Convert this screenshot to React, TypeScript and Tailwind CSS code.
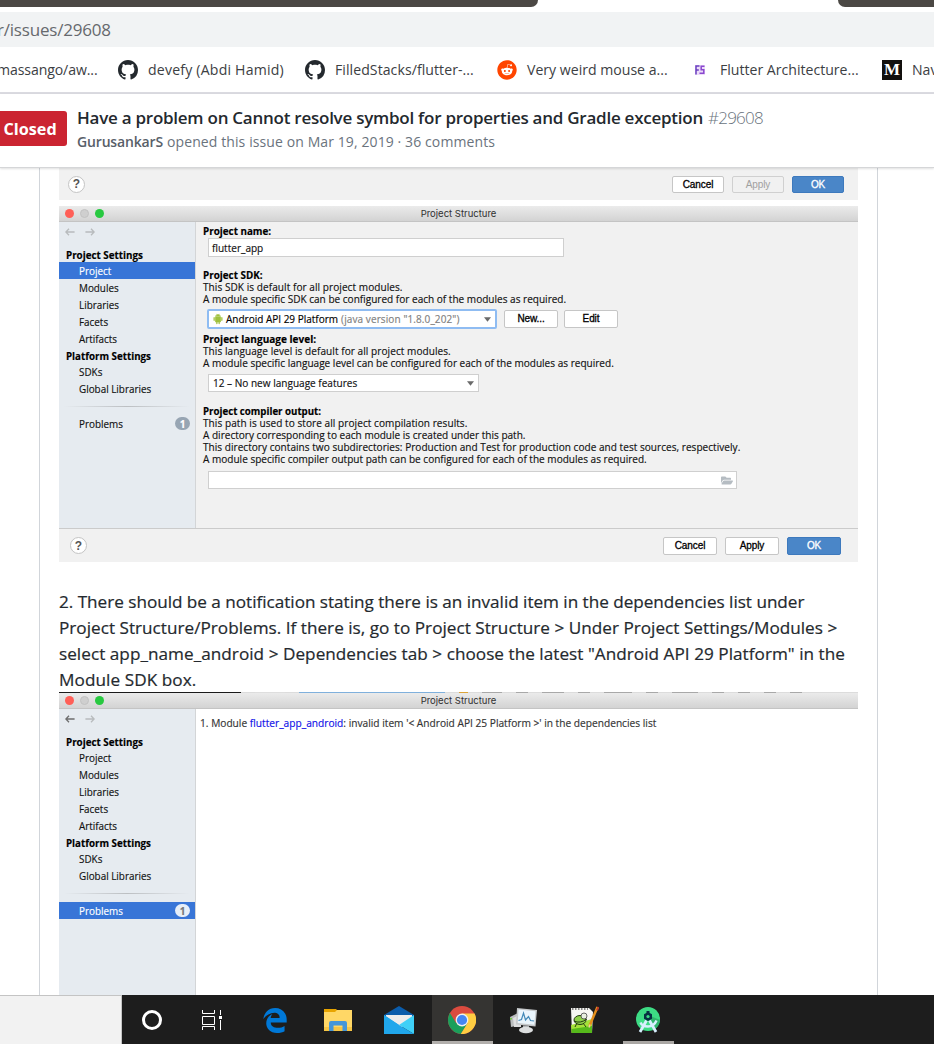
import type { ReactNode } from "react";
import { FaReddit, FaFolderOpen } from "react-icons/fa";
import { FaEdgeLegacy } from "react-icons/fa6";
import { AiFillAndroid } from "react-icons/ai";

function TabStrip() {
  return (
    <div className="flex h-[7px] justify-between bg-white">
      <div className="w-[538px] rounded-br-[9px] bg-[#4b4844]" />
      <div className="w-[96px] rounded-bl-[9px] bg-[#4b4844]" />
    </div>
  );
}

function GithubMark() {
  return (
    <svg className="h-5 w-5 shrink-0" viewBox="0 0 16 16" fill="#24292e">
      <path d="M8 0C3.58 0 0 3.58 0 8c0 3.54 2.29 6.53 5.47 7.59.4.07.55-.17.55-.38 0-.19-.01-.82-.01-1.49-2.01.37-2.53-.49-2.69-.94-.09-.23-.48-.94-.82-1.13-.28-.15-.68-.52-.01-.53.63-.01 1.08.58 1.23.82.72 1.21 1.87.87 2.33.66.07-.52.28-.87.51-1.07-1.78-.2-3.64-.89-3.64-3.95 0-.87.31-1.59.82-2.15-.08-.2-.36-1.02.08-2.12 0 0 .67-.21 2.2.82.64-.18 1.32-.27 2-.27s1.36.09 2 .27c1.53-1.04 2.2-.82 2.2-.82.44 1.1.16 1.92.08 2.12.51.56.82 1.27.82 2.15 0 3.07-1.87 3.75-3.65 3.95.29.25.54.73.54 1.48 0 1.07-.01 1.93-.01 2.2 0 .21.15.46.55.38A8.01 8.01 0 0 0 16 8c0-4.42-3.58-8-8-8z" />
    </svg>
  );
}

function Bookmarks() {
  return (
    <div className="flex h-[47px] items-center border-b-2 border-[#dadae0] bg-white text-[14.1px] whitespace-nowrap text-[#3c4043]">
      <span className="-ml-[3px] w-[121px] shrink-0 tracking-[-0.1px]">massango/aw...</span>
      <GithubMark />
      <span className="ml-[10px] w-[157px] shrink-0 tracking-[0.2px]">devefy (Abdi Hamid)</span>
      <GithubMark />
      <span className="ml-[10px] w-[162px] shrink-0 tracking-[0.06px]">FilledStacks/flutter-...</span>
      <FaReddit className="h-5 w-5 shrink-0 text-[#ff4500]" />
      <span className="ml-[10px] w-[168px] shrink-0">Very weird mouse a...</span>
      <svg className="h-[10px] w-[10px] shrink-0" viewBox="0 0 10 10" fill="none" strokeWidth="1.5">
        <rect width="10" height="10" fill="#ecdcf8" />
        <path d="M4.500 1H1v8.500M1 5h2.800" stroke="#6a3fc0" />
        <path d="M9.500 1.300H6.200V4.800h2.600v3.400H4.500" stroke="#8a48cf" />
      </svg>
      <span className="ml-[15px] w-[162px] shrink-0">Flutter Architecture...</span>
      <span className="flex h-5 w-5 shrink-0 items-center justify-center bg-[#12100e] font-['Liberation_Serif',serif] text-[17px] leading-none font-bold text-white">
        M
      </span>
      <span className="ml-[10px]">Nav</span>
    </div>
  );
}

function IssueHeader() {
  return (
    <div className="relative z-10 flex h-[74px] border-b border-[#d5d6d8] bg-white shadow-[0_1px_2px_rgba(0,0,0,0.12)]">
      <div className="mt-[17px] flex h-[35px] w-[67px] items-center rounded-r-[3px] bg-[#cb2431] pt-[2px] pl-[3.500px] text-[16.2px] font-bold text-white">
        Closed
      </div>
      <div className="mt-[12px] ml-[10px] whitespace-nowrap">
        <div className="flex h-[24px] items-center gap-[5px] text-[17px]">
          <span className="font-semibold tracking-[-0.25px] text-[#24292e]">
            Have a problem on Cannot resolve symbol for properties and Gradle exception
          </span>
          <span className="font-light tracking-[-0.75px] text-[#6a737d]">#29608</span>
        </div>
        <div className="flex h-[22px] items-center gap-[4px] text-[14px] text-[#6a737d]">
          <span className="font-semibold tracking-[-0.154px] text-[#586069]">GurusankarS</span>
          <span className="tracking-[0.1px]">opened this issue on Mar 19, 2019 · 36 comments</span>
        </div>
      </div>
    </div>
  );
}

function Help() {
  return (
    <span className="flex h-[17px] w-[17px] items-center justify-center rounded-full border border-[#c4c4c4] bg-white font-['Liberation_Sans',sans-serif] text-[12px] font-bold text-[#555]">
      ?
    </span>
  );
}

function Button({ children, kind = "plain", wide = false }: { children: ReactNode; kind?: "plain" | "off" | "primary"; wide?: boolean }) {
  const look = {
    plain: "border-[#c6c6c6] bg-white text-black [-webkit-text-stroke:0.3px_black]",
    off: "border-[#d0d0d0] bg-[#f1f1f1] text-[#a0a0a0]",
    primary: "border-[#3d79bd] bg-[#4a86c8] text-white [-webkit-text-stroke:0.3px_white]",
  }[kind];
  return (
    <span
      className={`flex items-center justify-center rounded-[2px] border font-['Liberation_Sans',sans-serif] text-[10px] tracking-[-0.1px] ${wide ? "h-[18px] w-[54px]" : "h-[17px] w-[52px]"} ${look}`}
    >
      {children}
    </span>
  );
}

function TitleBar() {
  return (
    <div className="grid h-[16px] grid-cols-[1fr_auto_1fr] items-center border-b border-[#c4c4c4] bg-linear-to-b from-[#ebebeb] to-[#d3d3d3]">
      <div className="flex gap-[6px] pl-[6px]">
        <i className="h-[9px] w-[9px] rounded-full bg-[#ff5f57]" />
        <i className="h-[9px] w-[9px] rounded-full border border-[#c2c2c2] bg-[#cfcfcf]" />
        <i className="h-[9px] w-[9px] rounded-full bg-[#28c940]" />
      </div>
      <span className="font-['Inter',sans-serif] text-[9.5px] leading-none text-[#303030]">Project Structure</span>
    </div>
  );
}

function Arrow({ flip = false, dark = false }: { flip?: boolean; dark?: boolean }) {
  return (
    <svg className={`h-[8px] w-[10px] ${flip ? "-scale-x-100" : ""} ${dark ? "text-[#6e6e6e]" : "text-[#b8bbbd]"}`} viewBox="0 0 10 8" fill="none" stroke="currentColor" strokeWidth="1.3">
      <path d="M9.6 4H1M4 .8.9 4 4 7.2" />
    </svg>
  );
}

function NavRow({ label, active = false, badge }: { label: string; active?: boolean; badge?: string }) {
  return (
    <div className={`flex h-[17px] items-center justify-between pr-[5px] pl-[20px] ${active ? "bg-[#3875d7] text-white" : ""}`}>
      <span>{label}</span>
      {badge && (
        <span className={`flex h-[13px] w-[15px] items-center justify-center rounded-full text-[10px] leading-none font-bold ${active ? "bg-[#e6eef8] text-[#777]" : "bg-[#97a5b3] text-white"}`}>
          {badge}
        </span>
      )}
    </div>
  );
}

function Sidebar({ active }: { active: string }) {
  return (
    <div className="w-[137px] shrink-0 border-r border-[#d3d5d7] bg-[#e6ebf0] text-[9.9px] leading-[12px] text-[#111] [-webkit-text-stroke:0.15px_currentColor]">
      <div className="flex h-[20px] items-center gap-[10px] pl-[6px]">
        <Arrow dark={active === "Problems"} />
        <Arrow flip />
      </div>
      <div className="h-[20px] pt-[8px] pl-[7px] text-[9.82px] font-bold text-black">Project Settings</div>
      {["Project", "Modules", "Libraries", "Facets", "Artifacts"].map((l) => (
        <NavRow key={l} label={l} active={l === active} />
      ))}
      <div className="h-[16px] pt-[4px] pl-[7px] text-[9.76px] font-bold text-black">Platform Settings</div>
      <NavRow label="SDKs" />
      <NavRow label="Global Libraries" />
      <div className="mx-[5px] mt-[9px] mb-[8px] h-px bg-linear-to-r from-transparent via-[#bcbfc2] to-transparent" />
      <NavRow label="Problems" badge="1" active={active === "Problems"} />
    </div>
  );
}

function Heading({ children, className = "" }: { children: ReactNode; className?: string }) {
  return <div className={`h-[12px] font-bold text-black ${className}`}>{children}</div>;
}

function Caret() {
  return (
    <svg className="h-[5px] w-[7px]" viewBox="0 0 7 5">
      <path d="M0 .3h7L3.5 4.7z" fill="#6a6a6a" />
    </svg>
  );
}

function ProjectPane() {
  return (
    <div className="flex-1 pt-[3px] pl-[7px] text-[10.05px] leading-[12px] whitespace-nowrap text-[#111] [-webkit-text-stroke:0.15px_currentColor]">
      <Heading className="text-[9.85px]">Project name:</Heading>
      <div className="mt-px ml-[5px] flex h-[19px] w-[356px] items-center border border-[#cfcfcf] bg-white pl-[3px]">flutter_app</div>
      <Heading className="mt-[12px] text-[9.85px]">Project SDK:</Heading>
      <div className="tracking-[0.06px]">This SDK is default for all project modules.</div>
      <div>A module specific SDK can be configured for each of the modules as required.</div>
      <div className="mt-[4px] ml-[4px] flex h-[20px] items-center">
        <div className="flex h-[20px] w-[290px] items-center rounded-[2px] border-2 border-[#8fbcf2] bg-white pr-[4px] pl-[3px] text-[10px]">
          <AiFillAndroid className="mr-[2px] h-[12px] w-[12px] text-[#9fc13c]" />
          <span className="text-black">Android API 29 Platform</span>
          <span className="ml-[3px] flex-1 tracking-[0.1px] text-[#808080]">(java version "1.8.0_202")</span>
          <Caret />
        </div>
        <div className="ml-[7px] flex gap-[6px]">
          <Button wide>New...</Button>
          <Button wide>Edit</Button>
        </div>
      </div>
      <Heading className="mt-[4px] text-[10.05px]">Project language level:</Heading>
      <div className="tracking-[0.06px]">This language level is default for all project modules.</div>
      <div>A module specific language level can be configured for each of the modules as required.</div>
      <div className="mt-[5px] ml-[5px] flex h-[18px] w-[271px] items-center justify-between border border-[#cfcfcf] bg-white pr-[4px] pl-[4px]">
        12 – No new language features
        <Caret />
      </div>
      <Heading className="mt-[14px] text-[9.7px]">Project compiler output:</Heading>
      <div className="-mt-px tracking-[0.06px]">This path is used to store all project compilation results.</div>
      <div>A directory corresponding to each module is created under this path.</div>
      <div className="tracking-[0.03px]">This directory contains two subdirectories: Production and Test for production code and test sources, respectively.</div>
      <div>A module specific compiler output path can be configured for each of the modules as required.</div>
      <div className="mt-[6px] ml-[5px] flex h-[18px] w-[529px] items-center justify-end border border-[#cfcfcf] bg-white pr-[3px]">
        <FaFolderOpen className="h-[11px] w-[12px] text-[#b5bcc2]" />
      </div>
    </div>
  );
}

function BackgroundSliver() {
  return (
    <div className="flex h-px gap-[14px] bg-[#dcdcdc]">
      <i className="w-[182px] bg-[#1b1b1b]" />
      <i className="w-[30px] bg-[#dedede]" />
      <i className="w-[146px] bg-[#7fb0dc]" />
      <i className="w-[9px] bg-[#dba43a]" />
      {[20, 12, 22, 12, 28, 12, 26, 12, 12, 12, 12].map((w, i) => (
        <i key={i} className="bg-[#a8a8a8]" style={{ width: w }} />
      ))}
    </div>
  );
}

function Article() {
  return (
    <div className="ml-[39px] flex h-[827px] w-[839px] flex-col overflow-hidden border-x border-[#d1d5da] bg-white pl-[19px]">
      <div className="flex h-[32px] w-[799px] shrink-0 items-center justify-between bg-[#f1f1f1] pr-[14px] pl-[9px]">
        <Help />
        <div className="flex gap-[8px]">
          <Button>Cancel</Button>
          <Button kind="off">Apply</Button>
          <Button kind="primary">OK</Button>
        </div>
      </div>

      <div className="mt-[6px] flex h-[356px] w-[799px] shrink-0 flex-col bg-[#f1f1f1]">
        <TitleBar />
        <div className="flex h-[306px]">
          <Sidebar active="Project" />
          <ProjectPane />
        </div>
        <div className="flex flex-1 items-center justify-between border-t border-[#cbcbcb] pr-[17px] pl-[11px]">
          <Help />
          <div className="flex gap-[8px]">
            <Button wide>Cancel</Button>
            <Button wide>Apply</Button>
            <Button wide kind="primary">OK</Button>
          </div>
        </div>
      </div>

      <div className="mt-[27px] h-[103px] shrink-0 text-[17.15px] leading-[26px] whitespace-nowrap text-[#24292e] [-webkit-text-stroke:0.2px_currentColor]">
        <div className="tracking-[-0.02px]">2. There should be a notification stating there is an invalid item in the dependencies list under</div>
        <div className="tracking-[0.02px]">Project Structure/Problems. If there is, go to Project Structure &gt; Under Project Settings/Modules &gt;</div>
        <div className="tracking-[0.04px]">select app_name_android &gt; Dependencies tab &gt; choose the latest "Android API 29 Platform" in the</div>
        <div className="tracking-[0.08px]">Module SDK box.</div>
      </div>

      <div className="flex w-[799px] flex-1 flex-col">
        <BackgroundSliver />
        <TitleBar />
        <div className="flex flex-1">
          <Sidebar active="Problems" />
          <div className="pt-[8px] pl-[4px] text-[10.18px] leading-[12px] whitespace-nowrap text-[#333] [-webkit-text-stroke:0.15px_currentColor]">
            1. Module <span className="text-[#1010e8]">flutter_app_android</span>: invalid item '&lt; Android API 25 Platform &gt;' in the dependencies list
          </div>
        </div>
      </div>
    </div>
  );
}

function TaskSlot({ children, className = "" }: { children: ReactNode; className?: string }) {
  return <div className={`flex h-[49px] items-center justify-center ${className}`}>{children}</div>;
}

function Taskbar() {
  return (
    <div className="flex h-[49px] bg-[#1d1d1d]">
      <div className="w-[122px] border-t border-r border-[#c4c4c4] bg-[#f2f2f2]" />
      <TaskSlot className="w-[60px] pt-px">
        <span className="h-[20px] w-[20px] rounded-full border-[3px] border-white" />
      </TaskSlot>
      <TaskSlot className="w-[60px]">
        <svg className="h-[20px] w-[20px]" viewBox="0 0 20 20" fill="none" stroke="#fff">
          <path d="M.5 0v3.5h12V0M.5 20v-3.5h12V20M.5 6.5h12v8H.5zM18.5 0v5M18.5 10v10" />
          <path d="M17 6h3v3h-3z" fill="#fff" stroke="none" />
        </svg>
      </TaskSlot>
      <TaskSlot className="w-[68px] pr-[2px] pt-px">
        <FaEdgeLegacy className="h-[27px] w-[26px] text-[#0078d7]" />
      </TaskSlot>
      <TaskSlot className="w-[56px]">
        <svg className="h-[24px] w-[28px]" viewBox="0 0 28 24">
          <path d="M0 1h12l2 2v3H0z" fill="#e8a400" />
          <path d="M0 4h11l2-2h15v21H0z" fill="#ffd766" />
          <path d="M0 19h28v4H0z" fill="#f6c544" />
          <path d="M5 23V15a2 2 0 0 1 2-2h14a2 2 0 0 1 2 2v8h-4.500v-5.500h-9V23z" fill="#4596d8" />
        </svg>
      </TaskSlot>
      <TaskSlot className="w-[66px] pt-px">
        <svg className="h-[28px] w-[30px]" viewBox="0 0 30 28">
          <path d="M0 9 15 0l15 9v5H0z" fill="#0a5cab" />
          <path d="M2 9h26v9L15 22 2 17z" fill="#ececec" />
          <path d="M0 9l15 10-15 9z" fill="#1ca4ea" />
          <path d="M30 9 15 19 30 28z" fill="#3fd0f7" />
          <path d="M0 28V9l15 10 15 9z" fill="#20a7ec" />
        </svg>
      </TaskSlot>
      <TaskSlot className="w-[61px] border-b-[3px] border-[#b2afac] bg-[#353432] pt-[4px] pr-[2px]">
        <svg className="h-[28px] w-[28px]" viewBox="0 0 28 28">
          <circle cx="14" cy="14" r="14" fill="#db4b3f" />
          <path d="M14 14 8.200 17.200 1.900 7A14 14 0 0 0 12.800 28L19.500 17.500z" fill="#1a9f5b" />
          <path d="M14 7.600h12.500A14 14 0 0 1 12.800 28l6.700-10.800z" fill="#ffcd42" />
          <circle cx="14" cy="14" r="6.400" fill="#f1f1f1" />
          <circle cx="14" cy="14" r="5.100" fill="#4587f3" />
        </svg>
      </TaskSlot>
      <TaskSlot className="w-[61px] pt-[3px] pr-[2px]">
        <svg className="h-[26px] w-[28px]" viewBox="0 0 28 26">
          <path d="M1 9 11 4v13l-9 2z" fill="#b9bcbd" />
          <path d="M4 10 12 6v13H5z" fill="#dedfe0" />
          <path d="M8 0 28 2 26.500 18.500 7 16.500z" fill="#c5c8ca" />
          <path d="M9.500 1.500 26.500 3.200 25.300 16.800 8.700 15z" fill="#eaf5fc" />
          <path d="M9.500 12.500l3-1 2-6.500 2 7 3-3.500 2 4 3.500.5" fill="none" stroke="#4289b8" strokeWidth="1.200" />
          <path d="M14 17.500h6v3h-6z" fill="#aeb1b3" />
          <ellipse cx="17" cy="22" rx="7" ry="3.200" fill="#dcdedf" />
          <path d="M1 10h2v1.500H1z" fill="#70c840" />
        </svg>
      </TaskSlot>
      <TaskSlot className="w-[63px] pr-[3px]">
        <svg className="h-[28px] w-[30px]" viewBox="0 0 30 28">
          <path d="M2 2h18l4 4-1 21H3z" fill="#f7f7f3" />
          <path d="M2 19 23 13v14H2.500z" fill="#a4e23a" />
          <path d="M2.500 23 23 20v7H3z" fill="#56b91b" />
          <path d="M3 3h16" stroke="#888" strokeWidth="2" strokeDasharray="1.500 1.500" />
          <ellipse cx="11" cy="14" rx="6" ry="4.500" fill="#8fd14a" stroke="#253c12" />
          <path d="M5 15q6 3 13-2M8 17l-2 4M14 17l3 4" fill="none" stroke="#253c12" />
          <circle cx="15" cy="10" r="3" fill="#e8efe0" stroke="#444" strokeWidth=".8" />
          <path d="M28.500 1 20.500 20" stroke="#e58f1b" strokeWidth="2.500" />
          <path d="M29.500 1 28 4.500" stroke="#b73a2a" strokeWidth="2" />
          <path d="M21 18.500 20 21.500" stroke="#eed39c" strokeWidth="1.500" />
        </svg>
      </TaskSlot>
      <TaskSlot className="ml-[6px] w-[51px] border-b-[3px] border-[#aaa7a4] pt-[4px] pr-px">
        <svg className="h-[28px] w-[24px]" viewBox="0 0 24 28">
          <circle cx="12" cy="13" r="12" fill="#3ddc84" />
          <path d="M12 9l12 5a12 12 0 0 1-7 10z" fill="#2fb56c" />
          <path d="M10.500 14.500 4 26M13.500 14.500 20 26" stroke="#d7effe" strokeWidth="2.800" />
          <path d="M4.500 16.500q1.500 4 7.500 4t8.500-6" fill="none" stroke="#d7effe" strokeWidth="2.400" />
          <path d="M10.500 5h3v4h-3z" fill="#073042" />
          <path d="M12 6l4 2.300v4.400L12 15l-4-2.300V8.300z" fill="#073042" />
          <circle cx="12" cy="10.500" r="1.600" fill="#3ddc84" />
        </svg>
      </TaskSlot>
    </div>
  );
}

export default function App() {
  return (
    <div className="h-[1044px] w-[934px] overflow-hidden bg-white font-['Open_Sans','Noto_Sans',sans-serif]">
      <TabStrip />
      <div className="mt-[5px] flex h-[35px] items-center bg-[#f1f3f4] text-[17px] tracking-[-0.2px] text-[#66696d]">
        <span className="-ml-[3px]">r/issues/29608</span>
      </div>
      <Bookmarks />
      <IssueHeader />
      <Article />
      <Taskbar />
    </div>
  );
}
